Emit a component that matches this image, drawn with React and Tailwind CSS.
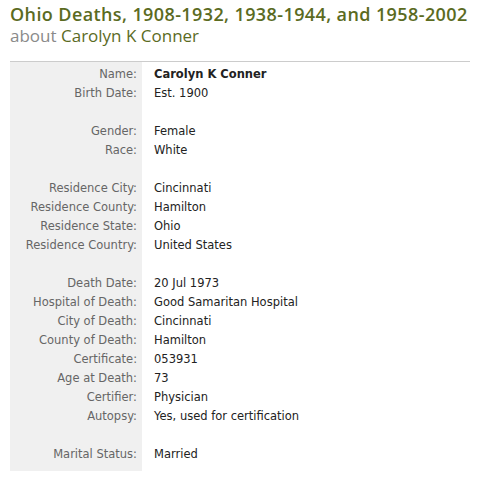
import React from "react";

const rows = [
  ["Name:", "Carolyn K Conner", true],
  ["Birth Date:", "Est. 1900"],
  null,
  ["Gender:", "Female"],
  ["Race:", "White"],
  null,
  ["Residence City:", "Cincinnati"],
  ["Residence County:", "Hamilton"],
  ["Residence State:", "Ohio"],
  ["Residence Country:", "United States"],
  null,
  ["Death Date:", "20 Jul 1973"],
  ["Hospital of Death:", "Good Samaritan Hospital"],
  ["City of Death:", "Cincinnati"],
  ["County of Death:", "Hamilton"],
  ["Certificate:", "053931"],
  ["Age at Death:", "73"],
  ["Certifier:", "Physician"],
  ["Autopsy:", "Yes, used for certification"],
  null,
  ["Marital Status:", "Married"],
];

const App = () => {
  return (
    <div className="w-[479px] h-[479px] bg-white font-['DejaVu_Sans',sans-serif]">
      <div className="px-[10px] pt-[3px]">
        <h1 className="text-[18px] leading-[22px] font-semibold text-[#5b6b1f] font-['Open_Sans',sans-serif] tracking-[0.4px] whitespace-nowrap">
          Ohio Deaths, 1908-1932, 1938-1944, and 1958-2002
        </h1>
        <div className="text-[17px] leading-[22px] text-[#5b6b1f] font-['Open_Sans',sans-serif]">
          <span className="text-[#8a8a8a]">about</span> Carolyn K Conner
        </div>
      </div>
      <div className="mx-[10px] mt-[14px] w-[460px] border-t border-[#cccccc] flex">
        <div className="w-[132px] bg-[#f0f0f0] pt-[3px] pb-[7px] pr-[5px]">
          {rows.map((r, i) => (
            <div
              key={i}
              className="h-[19px] leading-[19px] text-right text-[11.5px] text-[#666666] whitespace-nowrap"
            >
              {r ? r[0] : ""}
            </div>
          ))}
        </div>
        <div className="flex-1 pt-[3px] pl-[12px]">
          {rows.map((r, i) => (
            <div
              key={i}
              className={`h-[19px] leading-[19px] text-[11.5px] text-[#222222] whitespace-nowrap ${
                r && r[2] ? "font-bold" : ""
              }`}
            >
              {r ? r[1] : ""}
            </div>
          ))}
        </div>
      </div>
    </div>
  );
};

export default App;
